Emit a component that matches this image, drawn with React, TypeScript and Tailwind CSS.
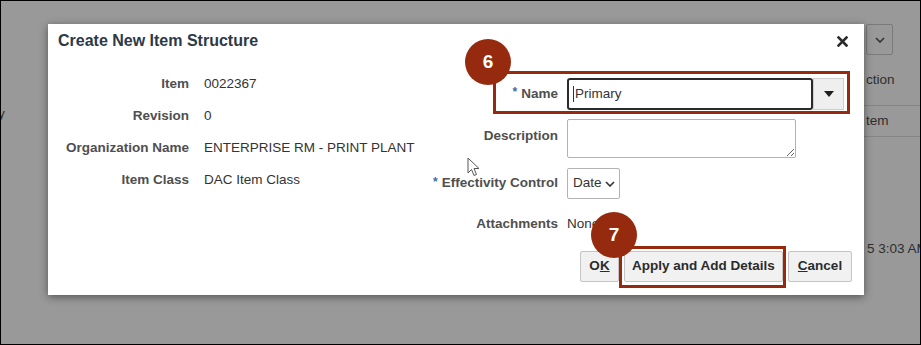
import React from "react";

const font = { fontFamily: '"Liberation Sans", Arial, sans-serif' };

function Badge({ n, className }: { n: string; className: string }) {
	return (
		<div
			className={`absolute w-[46px] h-[46px] rounded-full bg-[#962a0e] text-white text-[19px] font-bold flex items-center justify-center z-20 ${className}`}
		>
			{n}
		</div>
	);
}

function Btn({ children, className = "" }: { children: React.ReactNode; className?: string }) {
	return (
		<div
			className={`h-[31px] flex items-center justify-center bg-[#f1f1f1] border border-[#c5c5c5] rounded-[2px] text-[13.5px] font-bold text-[#2b2b2b] ${className}`}
		>
			{children}
		</div>
	);
}

export default function App() {
	return (
		<div
			style={font}
			className="w-[921px] h-[345px] border border-black bg-[#999999] flex overflow-hidden"
		>
			{/* page behind, left */}
			<div className="w-[47px] shrink-0 pt-[104px] text-[13.5px] text-[#2e2e2e]">
				<div className="h-[18px] leading-[18px] -ml-[3px]">y</div>
			</div>

			{/* dialog */}
			<div className="w-[816px] h-[271px] shrink-0 mt-[23px] bg-white shadow-[0_2px_8px_rgba(0,0,0,0.45)] relative z-10 flex flex-col">
				<div className="h-[36px] flex items-start justify-between pl-[10px] pr-[16px] pt-[7px]">
					<h1 className="text-[16px] leading-[20px] font-bold text-[#2d3947]">
						Create New Item Structure
					</h1>
					<svg width="11" height="11" viewBox="0 0 11 11" className="mt-[5px]">
						<path d="M1.5 1.5 L9.5 9.5 M9.5 1.5 L1.5 9.5" stroke="#2b2b2b" strokeWidth="2.6" strokeLinecap="square" />
					</svg>
				</div>

				<div className="flex mt-[8px]">
					{/* left details */}
					<div className="w-[372px] shrink-0 grid grid-cols-[141px_1fr] gap-x-[15px] auto-rows-[32px] text-[13.5px] content-start">
						<div className="text-right font-bold text-[#4f4f4f] self-center">Item</div>
						<div className="text-[#333] self-center">0022367</div>
						<div className="text-right font-bold text-[#4f4f4f] self-center">Revision</div>
						<div className="text-[#333] self-center">0</div>
						<div className="text-right font-bold text-[#4f4f4f] self-center">Organization Name</div>
						<div className="text-[#333] self-center whitespace-nowrap">ENTERPRISE RM - PRINT PLANT</div>
						<div className="text-right font-bold text-[#4f4f4f] self-center">Item Class</div>
						<div className="text-[#333] self-center">DAC Item Class</div>
					</div>

					{/* right form */}
					<div className="relative flex-1 pt-[10px] pr-[12px] grid grid-cols-[138px_1fr] gap-x-[9px] text-[13.5px] content-start">
						<div className="h-[32px] flex items-center justify-end font-bold text-[#4f4f4f]">
							<span className="text-[#3a6ea8] mr-[4px] text-[12px] -mt-[4px]">*</span>Name
						</div>
						<div className="h-[32px] flex">
							<div className="w-[246px] h-[32px] border-2 border-[#2a2a2a] rounded-[3px] flex items-center pl-[4px] text-[#333]">
								<span className="w-px h-[16px] bg-[#333] mr-[1px]" />
								Primary
							</div>
							<div className="w-[31px] h-[32px] bg-[#efefef] border border-[#cfcfcf] flex items-center justify-center">
								<svg width="10" height="6" viewBox="0 0 10 6">
									<path d="M0 0 H10 L5 6 Z" fill="#1f1f1f" />
								</svg>
							</div>
						</div>

						<div className="mt-[9px] h-[39px] flex items-start justify-end pt-[7px] font-bold text-[#4f4f4f]">
							Description
						</div>
						<div className="mt-[9px] h-[39px]">
							<textarea
								readOnly
								className="w-[229px] h-[39px] border border-[#b3b3b3] rounded-[2px] resize-y block"
							/>
						</div>

						<div className="mt-[10px] h-[31px] flex items-center justify-end font-bold text-[#4f4f4f] whitespace-nowrap">
							<span className="text-[#3a6ea8] mr-[4px] text-[12px] -mt-[4px]">*</span>Effectivity Control
						</div>
						<div className="mt-[10px] h-[31px]">
							<div className="w-[53px] h-[31px] border border-[#b3b3b3] rounded-[2px] flex items-center pl-[5px] gap-[3px] text-[#333]">
								Date
								<svg width="10" height="6" viewBox="0 0 10 6">
									<path d="M1 1 L5 5 L9 1" stroke="#333" strokeWidth="1.6" fill="none" />
								</svg>
							</div>
						</div>

						<div className="mt-[9px] h-[32px] flex items-center justify-end font-bold text-[#4f4f4f]">
							Attachments
						</div>
						<div className="mt-[9px] h-[32px] flex items-center text-[#333]">None</div>

						<div className="col-span-2 mt-[11px] flex justify-end gap-[5px]">
							<Btn className="w-[39px]">
								O<span className="underline">K</span>
							</Btn>
							<Btn className="w-[159px]">Apply and Add Details</Btn>
							<Btn className="w-[64px]">
								<span className="underline">C</span>ancel
							</Btn>
						</div>

						{/* annotations */}
						<div className="absolute left-[73px] top-[3px] w-[357px] h-[43px] border-[3px] border-[#962a0e] z-10" />
						<Badge n="6" className="left-[45px] -top-[29px]" />
						<div className="absolute left-[199px] top-[178px] w-[167px] h-[42px] border-[3px] border-[#962a0e] z-10" />
						<Badge n="7" className="left-[171px] top-[144px]" />

						{/* mouse pointer */}
						<svg
							width="16"
							height="21"
							viewBox="0 0 16 21"
							className="absolute left-[47px] top-[89px]"
						>
							<path
								d="M1 1 L1 16 L4.5 12.5 L7 18.5 L9.5 17.5 L7 11.5 L12 11.5 Z"
								fill="white"
								stroke="#555"
								strokeWidth="1"
								strokeLinejoin="round"
							/>
						</svg>
					</div>
				</div>
			</div>

			{/* page behind, right */}
			<div className="flex-1 min-w-0 overflow-hidden whitespace-nowrap text-[13.5px] text-[#2e2e2e] flex flex-col">
				<div className="ml-[2px] mt-[23px] w-[27px] h-[31px] border border-[#7a7a7a] rounded-[2px] flex items-center justify-center">
					<svg width="10" height="6" viewBox="0 0 10 6">
						<path d="M1 1 L5 5 L9 1" stroke="#333" strokeWidth="1.6" fill="none" />
					</svg>
				</div>
				<div className="h-[51px] flex items-center pl-[2px] border-b border-[#858585]">ction</div>
				<div className="h-[31px] flex items-center pl-[2px] border-b border-[#858585]">tem</div>
				<div className="mt-[103px] h-[18px] leading-[18px] pl-[3px]">5 3:03 AM</div>
			</div>
		</div>
	);
}
